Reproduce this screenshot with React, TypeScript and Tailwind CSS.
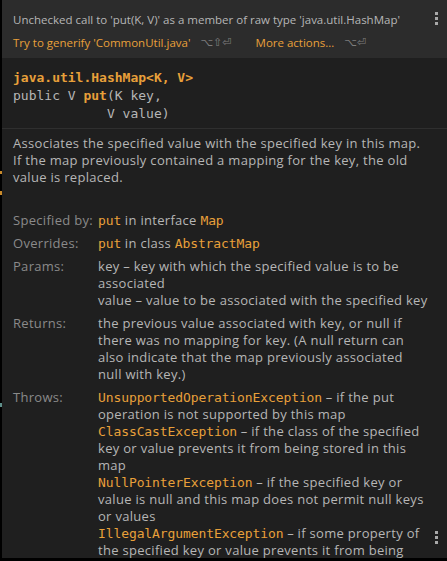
import React from 'react';

const ORANGE = 'text-[#e8a03a]';
const MONO = "font-['DejaVu_Sans_Mono','Liberation_Mono',monospace]";

function Code({ children }: { children: React.ReactNode }) {
    return <span className={`${MONO} ${ORANGE} text-[13px] tracking-[-0.1px]`}>{children}</span>;
}

function Dots() {
    return (
        <div className="flex flex-col gap-[2px]">
            <div className="h-[3px] w-[3px] bg-[#a9a9a9]" />
            <div className="h-[3px] w-[3px] bg-[#a9a9a9]" />
            <div className="h-[3px] w-[3px] bg-[#a9a9a9]" />
        </div>
    );
}

function Row({ label, children }: { label: string; children: React.ReactNode }) {
    return (
        <div className="flex">
            <div className="w-[85px] shrink-0 text-[#8a8a8a]">{label}</div>
            <div className="flex flex-col whitespace-nowrap">{children}</div>
        </div>
    );
}

export default function App() {
    return (
        <div className="relative h-[561px] w-[447px] overflow-hidden bg-black font-['Open_Sans','DejaVu_Sans',sans-serif]">
            {/* bits of the editor showing through on the left edge */}
            <div className="absolute left-0 top-[171px] h-[3px] w-[2px] bg-[#c98a2a]" />
            <div className="absolute left-0 top-[191px] h-[4px] w-[2px] bg-[#c98a2a]" />
            <div className="absolute left-0 top-[403px] h-[4px] w-[2px] bg-[#5f8f8a]" />

            <div className="ml-[2px] flex h-[558px] flex-col bg-[#1f1f1f]">
                {/* Header */}
                <div className="flex h-[58px] shrink-0 justify-between bg-[#2c2c2c] pl-[11px] pr-[9px]">
                    <div className="flex flex-col pt-[8px] text-[11.5px] leading-[23px]">
                        <div className="text-[#b6b6b6]">
                            Unchecked call to 'put(K, V)' as a member of raw type 'java.util.HashMap'
                        </div>
                        <div className="flex items-center">
                            <span className="text-[#e8a03a]">Try to generify 'CommonUtil.java'</span>
                            <span className="ml-[10px] font-['DejaVu_Sans',sans-serif] text-[11px] text-[#7d7d7d]">⌥⇧⏎</span>
                            <span className="ml-[24px] text-[#e8a03a]">More actions…</span>
                            <span className="ml-[10px] font-['DejaVu_Sans',sans-serif] text-[11px] text-[#7d7d7d]">⌥⏎</span>
                        </div>
                    </div>
                    <div className="pt-[12px]">
                        <Dots />
                    </div>
                </div>

                {/* Signature */}
                <div className={`${MONO} border-b border-[#2f2f2f] px-[11px] pt-[11px] pb-[5px] text-[13px] leading-[18px] text-[#b6b6b6] whitespace-pre`}>
                    <div className={`${ORANGE} font-bold`}>java.util.HashMap&lt;K, V&gt;</div>
                    <div>
                        public V <span className={`${ORANGE} font-bold`}>put</span>(K key,
                    </div>
                    <div>{'            V value)'}</div>
                </div>

                {/* Description */}
                <div className="px-[11px] pt-[6px] text-[13px] leading-[17px] tracking-[0.3px] text-[#b6b6b6]">
                    <div>Associates the specified value with the specified key in this map.</div>
                    <div>If the map previously contained a mapping for the key, the old</div>
                    <div>value is replaced.</div>
                </div>

                {/* Tags */}
                <div className="mt-[26px] flex flex-col gap-[6px] px-[11px] text-[13px] leading-[17px] tracking-[0.3px] text-[#b6b6b6]">
                    <Row label="Specified by:">
                        <div>
                            <Code>put</Code> in interface <Code>Map</Code>
                        </div>
                    </Row>
                    <Row label="Overrides:">
                        <div>
                            <Code>put</Code> in class <Code>AbstractMap</Code>
                        </div>
                    </Row>
                    <Row label="Params:">
                        <div>key – key with which the specified value is to be</div>
                        <div>associated</div>
                        <div>value – value to be associated with the specified key</div>
                    </Row>
                    <Row label="Returns:">
                        <div>the previous value associated with key, or null if</div>
                        <div>there was no mapping for key. (A null return can</div>
                        <div>also indicate that the map previously associated</div>
                        <div>null with key.)</div>
                    </Row>
                    <Row label="Throws:">
                        <div>
                            <Code>UnsupportedOperationException</Code> – if the put
                        </div>
                        <div>operation is not supported by this map</div>
                        <div>
                            <Code>ClassCastException</Code> – if the class of the specified
                        </div>
                        <div>key or value prevents it from being stored in this</div>
                        <div>map</div>
                        <div>
                            <Code>NullPointerException</Code> – if the specified key or
                        </div>
                        <div>value is null and this map does not permit null keys</div>
                        <div>or values</div>
                        <div>
                            <Code>IllegalArgumentException</Code> – if some property of
                        </div>
                        <div>the specified key or value prevents it from being</div>
                    </Row>
                </div>
            </div>

            <div className="absolute left-[435px] top-[531px]">
                <Dots />
            </div>
        </div>
    );
}
